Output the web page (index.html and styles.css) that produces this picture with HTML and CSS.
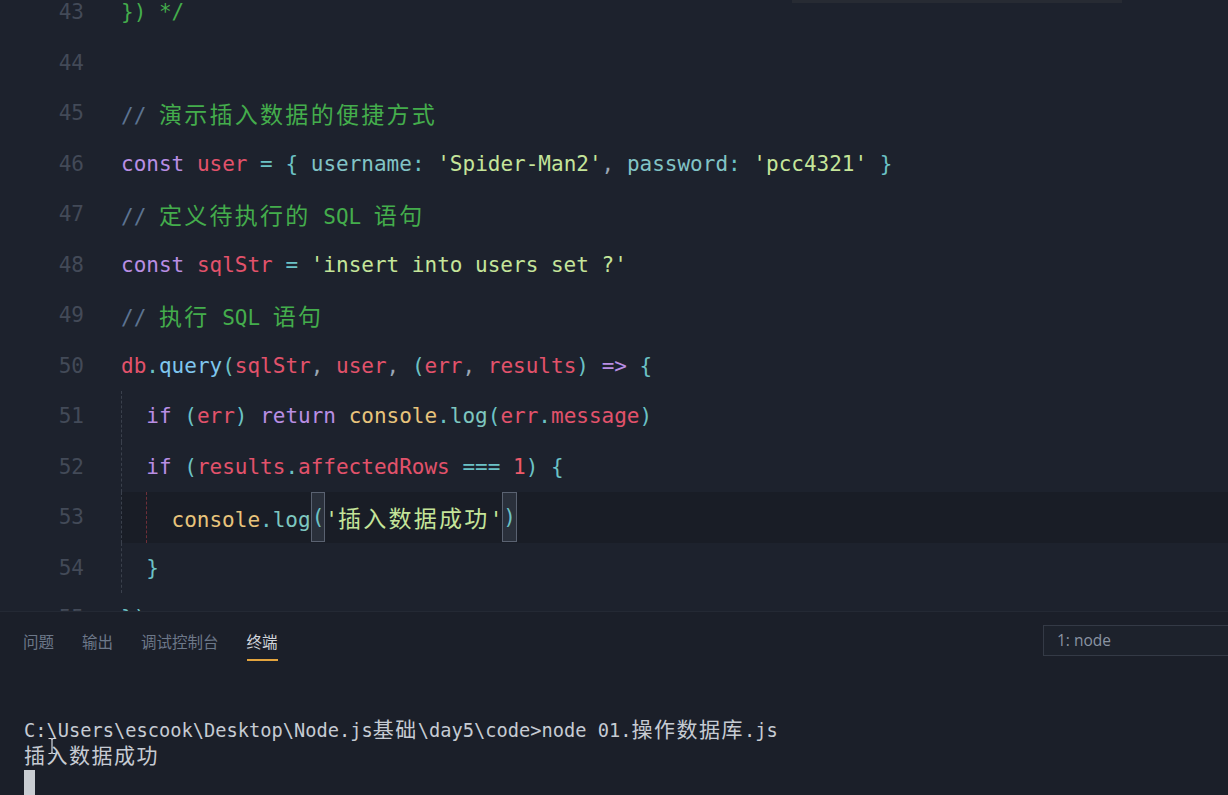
FILE: index.html
```html
<!DOCTYPE html>
<html lang="zh-CN">
<head>
<meta charset="utf-8">
<title>editor</title>
<link rel="stylesheet" href="styles.css">
</head>
<body>
<div class="app">
  <div class="editor">
    <div class="widget-edge"></div>
    <div class="code">
      <div class="line"><span class="ln">43</span><span class="src"><span class="cm">}) */</span></span></div>
      <div class="line"><span class="ln">44</span><span class="src"></span></div>
      <div class="line"><span class="ln">45</span><span class="src"><span class="cmp">//</span><span class="cm"> <span class="cj">演示插入数据的便捷方式</span></span></span></div>
      <div class="line"><span class="ln">46</span><span class="src"><span class="kw">const</span> <span class="vr">user</span> <span class="pu">=</span> <span class="pu">{</span> <span class="pr">username</span><span class="pu">:</span> <span class="st">'Spider-Man2'</span><span class="cma">,</span> <span class="pr">password</span><span class="pu">:</span> <span class="st">'pcc4321'</span> <span class="pu">}</span></span></div>
      <div class="line"><span class="ln">47</span><span class="src"><span class="cmp">//</span><span class="cm"> <span class="cj">定义待执行的</span> SQL <span class="cj">语句</span></span></span></div>
      <div class="line"><span class="ln">48</span><span class="src"><span class="kw">const</span> <span class="vr">sqlStr</span> <span class="pu">=</span> <span class="st">'insert into users set ?'</span></span></div>
      <div class="line"><span class="ln">49</span><span class="src"><span class="cmp">//</span><span class="cm"> <span class="cj">执行</span> SQL <span class="cj">语句</span></span></span></div>
      <div class="line"><span class="ln">50</span><span class="src"><span class="vr">db</span><span class="pu">.</span><span class="fn">query</span><span class="pu">(</span><span class="vr">sqlStr</span><span class="cma">,</span> <span class="vr">user</span><span class="cma">,</span> <span class="pu">(</span><span class="vr">err</span><span class="cma">,</span> <span class="vr">results</span><span class="pu">)</span> <span class="kw">=&gt;</span> <span class="pu">{</span></span></div>
      <div class="line"><span class="ln">51</span><span class="src"><span class="ind"></span><span class="kw">if</span> <span class="pu">(</span><span class="vr">err</span><span class="pu">)</span> <span class="kw">return</span> <span class="ob">console</span><span class="pu">.</span><span class="me">log</span><span class="pu">(</span><span class="vr">err</span><span class="pu">.</span><span class="vr">message</span><span class="pu">)</span></span></div>
      <div class="line"><span class="ln">52</span><span class="src"><span class="ind"></span><span class="kw">if</span> <span class="pu">(</span><span class="vr">results</span><span class="pu">.</span><span class="vr">affectedRows</span> <span class="pu">===</span> <span class="nu">1</span><span class="pu">)</span> <span class="pu">{</span></span></div>
      <div class="line"><span class="ln">53</span><span class="src current"><span class="ind"></span><span class="ind ind-red"></span><span class="ob">console</span><span class="pu">.</span><span class="me">log</span><span class="bm">(</span><span class="st">'<span class="cj">插入数据成功</span>'</span><span class="bm">)</span></span></div>
      <div class="line"><span class="ln">54</span><span class="src"><span class="ind"></span><span class="pu">}</span></span></div>
      <div class="line"><span class="ln">55</span><span class="src"><span class="pu">})</span></span></div>
    </div>
  </div>
  <div class="panel">
    <div class="tabs">
      <span class="tab">问题</span>
      <span class="tab">输出</span>
      <span class="tab">调试控制台</span>
      <span class="tab active">终端</span>
      <div class="select">1: node</div>
    </div>
    <div class="term">
      <div class="tline">C:\Users\escook\Desktop\Node.js<span class="tcj">基础</span>\day5\code&gt;node 01.<span class="tcj">操作数据库</span>.js</div>
      <div class="tline"><span class="tcj">插入数据成功</span></div>
      <div class="cursor"></div>
    </div>
    <svg class="ibeam" width="10" height="18" viewBox="0 0 10 18"><path d="M1.5 1.5h2.5l1 1 1-1h2.5M5 2.5v13M1.5 16.5h2.5l1-1 1 1h2.5" fill="none" stroke="#d8dbe0" stroke-width="1.2"/></svg>
  </div>
</div>
</body>
</html>
```
FILE: styles.css
```css
html, body {
  margin: 0;
  padding: 0;
  background: #1d222d;
}

.app {
  width: 1228px;
  height: 795px;
  overflow: hidden;
  display: flex;
  flex-direction: column;
  position: relative;
}

.editor {
  height: 611px;
  flex: none;
  overflow: hidden;
  position: relative;
  background: #1d222d;
}

.widget-edge {
  position: absolute;
  left: 792px;
  top: 0;
  width: 330px;
  height: 3px;
  background: #272b33;
}

.code {
  margin-top: -13px;
  font-family: "DejaVu Sans Mono", "Noto Sans CJK SC", monospace;
  font-size: 21px;
}

.line {
  display: flex;
  height: 50.5px;
  line-height: 50.5px;
}

.ln {
  width: 84px;
  flex: none;
  text-align: right;
  color: #434a58;
  padding-right: 37px;
}

.src {
  flex: 1;
  display: block;
  white-space: pre;
  color: #a6b0c0;
  height: 50.5px;
  overflow: hidden;
}

.src.current {
  background: #191d26;
}

.ind {
  display: inline-block;
  vertical-align: top;
  width: 25.28px;
  height: 50.5px;
  box-sizing: border-box;
  border-left: 1px dashed #3a404c;
}

.ind-red {
  border-left-color: #6e2f38;
}

.cj {
  font-family: "Noto Sans CJK SC", sans-serif;
  font-size: 23px;
  letter-spacing: 2.28px;
}

.cm { color: #44ad4c; }
.cmp { color: #5c7391; }
.kw { color: #b98ee4; }
.vr { color: #e2526b; }
.pu { color: #6cc2c6; }
.cma { color: #9aa6b4; }
.pr { color: #82c4c6; }
.st { color: #c5e59a; }
.fn { color: #7fc6ee; }
.ob { color: #e8c47c; }
.me { color: #7ec7c0; }
.nu { color: #ee5a6a; }

.bm {
  display: inline-block;
  vertical-align: top;
  height: 50px;
  line-height: 48px;
  box-sizing: border-box;
  border: 1px solid #5a6271;
  background: #2a303b;
  color: #6cc2c6;
}

.panel {
  flex: 1;
  position: relative;
  background: #1b1f29;
  border-top: 1px solid #242934;
  box-sizing: border-box;
}

.tabs {
  height: 57px;
  display: flex;
  align-items: center;
  padding-left: 23px;
  gap: 28px;
  font-family: "Noto Sans CJK SC", "Noto Sans", sans-serif;
  font-size: 15.5px;
}

.tab {
  padding: 10px 0 8px;
  line-height: 20px;
  border-bottom: 2px solid transparent;
  color: #6d7889;
}

.tab.active {
  color: #d3d7dd;
  border-bottom-color: #e3a43e;
}

.select {
  margin-left: auto;
  width: 185px;
  height: 31px;
  box-sizing: border-box;
  border: 1px solid #343a46;
  border-right: none;
  background: #1d222c;
  color: #8a94a3;
  font-family: "Open Sans", "Noto Sans", sans-serif;
  font-size: 15.5px;
  line-height: 29px;
  padding-left: 13px;
}

.term {
  padding: 46px 0 0 24px;
  font-family: "DejaVu Sans Mono", "Noto Sans CJK SC", monospace;
  font-size: 18.7px;
  color: #c6cbd3;
}

.tline {
  height: 26px;
  line-height: 26px;
  white-space: pre;
}

.tcj {
  font-family: "Noto Sans CJK SC", sans-serif;
  font-size: 21px;
  letter-spacing: 1.5px;
}

.cursor {
  margin-top: 3px;
  width: 11px;
  height: 26px;
  background: #c9cdd2;
}

.ibeam {
  position: absolute;
  left: 47px;
  top: 125px;
}
```
